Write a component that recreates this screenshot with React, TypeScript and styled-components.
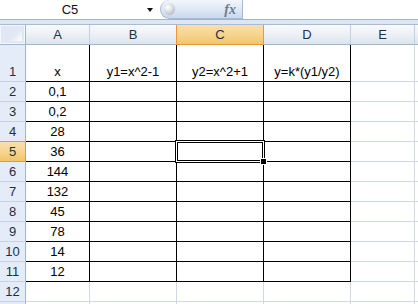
import React from "react";
import styled, { createGlobalStyle, css } from "styled-components";

const Global = createGlobalStyle`
  html, body { margin: 0; padding: 0; background: #ffffff; overflow: hidden; }
  body { font-family: "Liberation Sans", Arial, sans-serif; }
`;

const Root = styled.div`
  width: 418px;
  height: 304px;
  overflow: hidden;
  background: #ffffff;
`;

const FormulaBar = styled.div`
  display: flex;
  height: 19px;
  background: #ffffff;
`;

const NameBox = styled.div`
  width: 160px;
  display: flex;
  align-items: center;
  position: relative;
`;

const NameText = styled.span`
  flex: 1;
  text-align: center;
  padding-left: 4px;
  padding-right: 24px;
  font-size: 13px;
  color: #111;
  line-height: 19px;
`;

const DropArrow = styled.span`
  position: absolute;
  left: 147px;
  top: 8px;
  width: 0;
  height: 0;
  border-left: 3.5px solid transparent;
  border-right: 3.5px solid transparent;
  border-top: 4px solid #111;
`;

const FxButton = styled.div`
  width: 83px;
  height: 19px;
  box-sizing: border-box;
  border-radius: 10px 0 0 10px;
  border: 1px solid #a7bad3;
  border-top: none;
  background: linear-gradient(#f3f6fb 0%, #dfe8f5 50%, #c8d8ee 100%);
  display: flex;
  align-items: center;
  padding-left: 3px;
  padding-right: 6px;
`;

const Knob = styled.span`
  width: 11px;
  height: 12px;
  border-radius: 50%;
  background: radial-gradient(circle at 35% 35%, #ffffff 0%, #d9dde2 45%, #9ea4ab 100%);
`;

const FxLabel = styled.span`
  margin-left: auto;
  font-family: "Liberation Serif", "Times New Roman", serif;
  font-style: italic;
  font-weight: bold;
  font-size: 14px;
  color: #6d7c8f;
  line-height: 19px;
`;

const FormulaInput = styled.div`
  flex: 1;
  background: #ffffff;
`;

const Separator = styled.div`
  height: 4px;
  border-top: 1px solid #9fb3cd;
  border-bottom: 1px solid #a9bcd4;
  background: #dde6f1;
`;

const Sheet = styled.div`
  position: relative;
  display: grid;
  grid-template-columns: 26px 64px 87px 87px 87px 64px 64px;
  grid-template-rows: 20px 37px repeat(12, 20px);
`;

const Corner = styled.div`
  box-sizing: border-box;
  border-right: 1px solid #9eb6ce;
  border-bottom: 1px solid #9eb6ce;
  background: #dfe8f4;
  position: relative;
  box-shadow: inset 0 0 0 1px #f4f7fb;
`;

const CornerTri = styled.svg`
  position: absolute;
  right: 3px;
  bottom: 3px;
`;

const ColHead = styled.div<{ $sel?: boolean }>`
  box-sizing: border-box;
  border-right: 1px solid #c0cfe2;
  border-bottom: 1px solid #9eb6ce;
  background: linear-gradient(#f8fafc 0%, #eef2f7 45%, #dde4ee 100%);
  display: flex;
  align-items: center;
  justify-content: center;
  font-size: 13px;
  color: #1d2f48;
  position: relative;
  ${(p) =>
    p.$sel &&
    css`
      background: linear-gradient(#f9dfae 0%, #f7d48f 50%, #f3c56a 100%);
      border-bottom-color: #f29436;
      border-right-color: #f29436;
      &::before {
        content: "";
        position: absolute;
        left: -1px;
        top: 0;
        bottom: -1px;
        width: 1px;
        background: #f29436;
      }
    `}
`;

const RowHead = styled.div<{ $sel?: boolean }>`
  box-sizing: border-box;
  border-right: 1px solid #9eb6ce;
  border-bottom: 1px solid #c5d3e5;
  background: #e4ecf7;
  display: flex;
  align-items: flex-end;
  justify-content: center;
  padding-bottom: 2px;
  font-size: 13px;
  color: #1d2f48;
  position: relative;
  ${(p) =>
    p.$sel &&
    css`
      background: linear-gradient(#f9dfae 0%, #f7d48f 50%, #f3c56a 100%);
      border-bottom-color: #f29436;
      border-right-color: #f29436;
      &::before {
        content: "";
        position: absolute;
        left: 0;
        right: -1px;
        top: -1px;
        height: 1px;
        background: #f29436;
      }
    `}
`;

const Cell = styled.div<{ $boxed?: boolean }>`
  box-sizing: border-box;
  border-right: 1px solid ${(p) => (p.$boxed ? "#000" : "#d0d7e5")};
  border-bottom: 1px solid ${(p) => (p.$boxed ? "#000" : "#d0d7e5")};
  display: flex;
  align-items: flex-end;
  justify-content: center;
  padding-bottom: 2px;
  font-size: 13px;
  color: #000;
  white-space: nowrap;
  overflow: visible;
`;

const Selection = styled.div`
  position: absolute;
  left: 175px;
  top: 115px;
  width: 90px;
  height: 23px;
  box-sizing: border-box;
  border: 1px solid #000;
  box-shadow: inset 0 0 0 1px #fff, inset 0 0 0 2px #000;
  pointer-events: none;
`;

const FillHandle = styled.div`
  position: absolute;
  left: 261px;
  top: 134px;
  width: 5px;
  height: 5px;
  background: #000;
  box-shadow: 0 0 0 1px #fff;
`;

const cols = ["A", "B", "C", "D", "E", ""];
const xs = ["x", "0,1", "0,2", "28", "36", "144", "132", "45", "78", "14", "12"];
const head = ["y1=x^2-1", "y2=x^2+1", "y=k*(y1/y2)"];

export default function App() {
  const rows: React.ReactNode[] = [];
  for (let r = 1; r <= 12; r++) {
    rows.push(
      <RowHead key={`rh${r}`} $sel={r === 5}>
        {r}
      </RowHead>
    );
    for (let c = 0; c < 6; c++) {
      const boxed = r <= 11 && c <= 3;
      let text = "";
      if (c === 0 && r <= 11) text = xs[r - 1];
      if (r === 1 && c >= 1 && c <= 3) text = head[c - 1];
      rows.push(
        <Cell key={`c${r}-${c}`} $boxed={boxed}>
          {text}
        </Cell>
      );
    }
  }
  return (
    <Root>
      <Global />
      <FormulaBar>
        <NameBox>
          <NameText>C5</NameText>
          <DropArrow />
        </NameBox>
        <FxButton>
          <Knob />
          <FxLabel>fx</FxLabel>
        </FxButton>
        <FormulaInput />
      </FormulaBar>
      <Separator />
      <Sheet>
        <Corner>
          <CornerTri width="13" height="12" viewBox="0 0 13 12">
            <defs>
              <linearGradient id="tri" x1="0" y1="0" x2="1" y2="1">
                <stop offset="0" stopColor="#c9d6e6" />
                <stop offset="1" stopColor="#ffffff" />
              </linearGradient>
            </defs>
            <polygon points="13,0 13,12 0,12" fill="url(#tri)" />
          </CornerTri>
        </Corner>
        {cols.map((c, i) => (
          <ColHead key={`h${i}`} $sel={c === "C"}>
            {c}
          </ColHead>
        ))}
        {rows}
        <RowHead />
        {cols.map((_, i) => (
          <Cell key={`r13-${i}`} />
        ))}
        <Selection />
        <FillHandle />
      </Sheet>
    </Root>
  );
}
